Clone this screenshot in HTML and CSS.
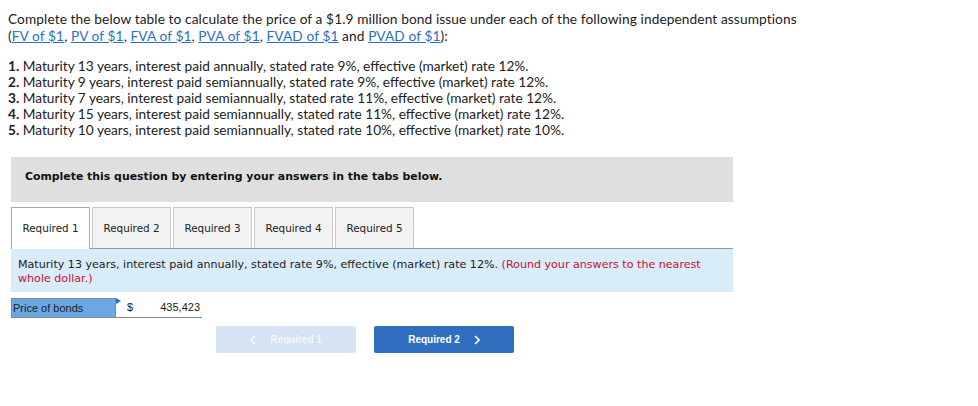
FILE: index.html
```html
<!DOCTYPE html>
<html lang="en">
<head>
    <meta charset="UTF-8">
    <title>Bond Price</title>
    <link rel="stylesheet" href="styles.css">
</head>
<body>
    <div class="intro">
        <p>Complete the below table to calculate the price of a $1.9 million bond issue under each of the following independent assumptions<br>
        (<a href="#">FV of $1</a>, <a href="#">PV of $1</a>, <a href="#">FVA of $1</a>, <a href="#">PVA of $1</a>, <a href="#">FVAD of $1</a> and <a href="#">PVAD of $1</a>):</p>
        <ol class="items">
            <li><b>1.</b> Maturity 13 years, interest paid annually, stated rate 9%, effective (market) rate 12%.</li>
            <li><b>2.</b> Maturity 9 years, interest paid semiannually, stated rate 9%, effective (market) rate 12%.</li>
            <li><b>3.</b> Maturity 7 years, interest paid semiannually, stated rate 11%, effective (market) rate 12%.</li>
            <li><b>4.</b> Maturity 15 years, interest paid semiannually, stated rate 11%, effective (market) rate 12%.</li>
            <li><b>5.</b> Maturity 10 years, interest paid semiannually, stated rate 10%, effective (market) rate 10%.</li>
        </ol>
    </div>

    <div class="question">
        <div class="banner">Complete this question by entering your answers in the tabs below.</div>

        <div class="tabs">
            <div class="tab active">Required 1</div>
            <div class="tab">Required 2</div>
            <div class="tab">Required 3</div>
            <div class="tab">Required 4</div>
            <div class="tab">Required 5</div>
        </div>

        <div class="info">
            Maturity 13 years, interest paid annually, stated rate 9%, effective (market) rate 12%.
            <span class="note">(Round your answers to the nearest<br>whole dollar.)</span>
        </div>

        <div class="answer">
            <div class="label">Price of bonds</div>
            <div class="value">
                <span class="flag"></span>
                <span class="cur">$</span>
                <span class="num">435,423</span>
            </div>
        </div>

        <div class="nav">
            <button class="btn prev" disabled>
                <svg class="arr" width="6" height="10" viewBox="0 0 6 10"><path d="M5 1 L1 5 L5 9" fill="none" stroke="currentColor" stroke-width="1.6"/></svg>
                Required 1
            </button>
            <button class="btn next">
                Required 2
                <svg class="arr" width="6" height="10" viewBox="0 0 6 10"><path d="M1 1 L5 5 L1 9" fill="none" stroke="currentColor" stroke-width="1.6"/></svg>
            </button>
        </div>
    </div>
</body>
</html>
```

FILE: styles.css
```css
body {
    margin: 0;
    padding: 10px 8px;
    font-family: Lato, Arial, sans-serif;
    color: #222;
    background: #fff;
}
.intro {
    font-size: 13.7px;
    line-height: 16px;
}
.intro p {
    margin: 0 0 14px 0;
    line-height: 17px;
    letter-spacing: 0.1px;
    white-space: nowrap;
}
.intro a {
    color: #2a6fc4;
    text-decoration: underline;
}
.items {
    list-style: none;
    margin: 0;
    padding: 0;
}
.items b {
    font-weight: 700;
}
.question {
    margin: 19px 0 0 3px;
    width: 722px;
    font-family: "DejaVu Sans", Verdana, sans-serif;
}
.banner {
    background: #dfdfdf;
    height: 45px;
    line-height: 40px;
    padding: 0 14px;
    font-size: 10.9px;
    font-weight: bold;
    color: #111;
}
.tabs {
    display: flex;
    gap: 2px;
    margin-top: 5px;
    border-bottom: 1px solid #999;
}
.tab {
    width: 77px;
    height: 40px;
    line-height: 40px;
    text-align: center;
    font-size: 10.4px;
    color: #222;
    background: #f2f2f2;
    border: 1px solid #c8c8c8;
    border-bottom: none;
}
.tab.active {
    background: #fff;
    border-color: #aaa;
    height: 41px;
    margin-bottom: -1px;
}
.info {
    background: #d9ecfa;
    padding: 9px 7px 6px;
    font-size: 11.1px;
    line-height: 14px;
    color: #222;
}
.info .note {
    color: #c8102e;
}
.answer {
    display: flex;
    margin-top: 6px;
    height: 20px;
    font-family: "Liberation Sans", Arial, sans-serif;
    font-size: 11px;
}
.label {
    width: 105px;
    box-sizing: border-box;
    background: #6aa8e8;
    border: 1px solid #888;
    padding-left: 1px;
    line-height: 18px;
    color: #222;
}
.value {
    position: relative;
    width: 86px;
    box-sizing: border-box;
    border-bottom: 1px solid #888;
    display: flex;
    justify-content: space-between;
    line-height: 19px;
    padding: 0 2px 0 11px;
}
.flag {
    position: absolute;
    left: 0;
    top: 0;
    width: 0;
    height: 0;
    border-left: 5px solid #2a6fc4;
    border-top: 3px solid transparent;
    border-bottom: 3px solid transparent;
}
.nav {
    display: flex;
    gap: 18px;
    margin: 8px 0 0 205px;
}
.btn {
    width: 140px;
    height: 27px;
    border: none;
    border-radius: 2px;
    font-family: "Liberation Sans", Arial, sans-serif;
    font-size: 10px;
    font-weight: bold;
    color: #fff;
    cursor: pointer;
    display: flex;
    align-items: center;
    justify-content: center;
    gap: 14px;
}
.prev {
    background: #d6e3f3;
    color: #f4f7fb;
}
.next {
    background: #2e6fc0;
}
```
